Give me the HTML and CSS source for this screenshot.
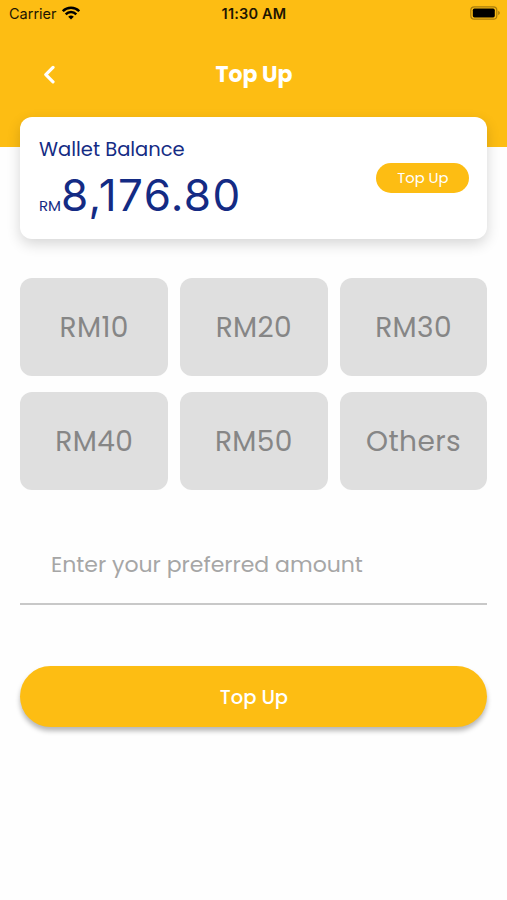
FILE: index.html
```html
<!DOCTYPE html>
<html lang="en">
<head>
<meta charset="utf-8">
<title>Top Up</title>
<link rel="stylesheet" href="styles.css">
</head>
<body>
<header class="header">
  <div class="status">
    <div class="carrier"><span class="carrier-name">Carrier</span>
      <svg class="wifi" width="18" height="14" viewBox="0 0 18 14" fill="none" stroke="#000" stroke-width="2.5"><path d="M.8 5.2a11.6 11.6 0 0 1 16.4 0"/><path d="M3.7 8.3a7.5 7.5 0 0 1 10.6 0"/><path d="M9 13.6 6.2 10.8a4 4 0 0 1 5.6 0z" fill="#000" stroke="none"/></svg>
    </div>
    <span class="time">11:30 AM</span>
    <svg class="battery" width="31" height="14" viewBox="0 0 31 14"><rect x=".8" y=".8" width="26" height="12.4" rx="3.5" fill="none" stroke="#a87d0c" stroke-width="1.2"/><rect x="2.8" y="2.6" width="22" height="8.8" rx="1.6"/><path d="M28.2 4.8q3.4 2.2 0 4.4z" fill="#a87d0c"/></svg>
  </div>
  <nav class="nav">
    <svg class="back" width="12" height="20" viewBox="0 0 12 20" fill="none" stroke="#fff" stroke-width="3.2" stroke-linecap="round" stroke-linejoin="round"><path d="M10 2.4 2.8 9.6l7.2 7.2"/></svg>
    <h1 class="title">Top Up</h1>
  </nav>
</header>
<main class="content">
  <section class="card">
    <div class="balance">
      <div class="label">Wallet Balance</div>
      <div class="amount"><span class="currency">RM</span><span class="value">8,176.80</span></div>
    </div>
    <button class="pill">Top Up</button>
  </section>
  <section class="grid">
    <button class="option">RM10</button>
    <button class="option">RM20</button>
    <button class="option">RM30</button>
    <button class="option">RM40</button>
    <button class="option">RM50</button>
    <button class="option">Others</button>
  </section>
  <div class="field">Enter your preferred amount</div>
  <button class="submit">Top Up</button>
</main>
</body>
</html>
```

FILE: styles.css
```css
* { box-sizing: border-box; }
body {
  margin: 0;
  height: 900px;
  background: #fefefe;
  font-family: Poppins, Inter, sans-serif;
  white-space: nowrap;
}
button { border: 0; padding: 0; font: inherit; display: flex; align-items: center; justify-content: center; }
.header { height: 147.4px; background: #fdbd13; }
.status {
  height: 28px;
  padding: 0 6px 0 9px;
  display: grid;
  grid-template-columns: 1fr auto 1fr;
  align-items: center;
  font-family: Inter, sans-serif;
  color: #1d1602;
}
.carrier { display: flex; align-items: center; gap: 5px; font-size: 14.5px; line-height: 18px; }
.wifi { margin-top: -2px; }
.time { font-size: 14.5px; line-height: 18px; font-weight: 600; letter-spacing: .2px; margin: -1px 0 0 -2px; }
.battery { justify-self: end; margin-top: -2px; }
.nav {
  height: 94px;
  padding: 0 43px;
  display: grid;
  grid-template-columns: 12px 1fr 12px;
  align-items: center;
}
.title { margin: 0; padding-left: 1px; text-align: center; color: #fff; font-size: 22px; line-height: 30px; font-weight: 700; }
.content { padding: 0 19.6px 0 20.4px; margin-top: -30.4px; }
.card {
  height: 122px;
  border-radius: 12px;
  background: #fff;
  box-shadow: 0 5px 14px rgba(0, 0, 0, .16);
  padding: 0 18px 0 18.6px;
  display: flex;
  align-items: center;
  justify-content: space-between;
}
.balance { color: #142b84; height: 84px; }
.label { font-size: 19.5px; line-height: 28px; }
.amount { display: flex; align-items: baseline; line-height: 60px; margin-top: 1px; }
.currency { font-size: 15px; }
.value { font-family: Inter, sans-serif; font-size: 44px; letter-spacing: 1.35px; }
.pill { width: 93px; height: 30.5px; border-radius: 16px; background: #fdbd13; color: #fff; font-size: 14.8px; }
.grid { display: grid; grid-template-columns: repeat(3, 1fr); grid-auto-rows: 98px; gap: 16px 12px; margin-top: 39px; }
.option { padding-top: 2px; border-radius: 12px; background: #dfdfdf; color: #868686; font-size: 28px; letter-spacing: .4px; }
.field { height: 80px; margin-top: 35px; padding-left: 30.6px; display: flex; align-items: center; border-bottom: 2px solid #c8c8c8; color: #a6a6a6; font-size: 22px; }
.submit { width: 100%; height: 61px; margin-top: 61px; padding-top: 1px; border-radius: 31px; background: #fdbd13; color: #fff; font-size: 19.5px; font-weight: 500; box-shadow: 0 4px 5px rgba(0, 0, 0, .28); }
```
